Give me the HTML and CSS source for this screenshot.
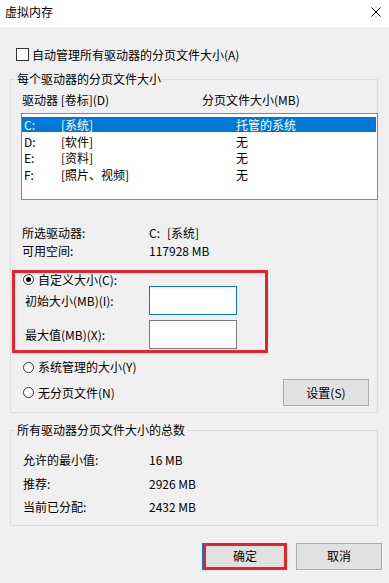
FILE: index.html
```html
<!DOCTYPE html>
<html lang="zh-CN">
<head>
    <meta charset="UTF-8">
    <meta name="viewport" content="width=device-width, initial-scale=1.0">
    <title>虚拟内存</title>
    <link rel="stylesheet" href="styles.css">
</head>
<body>
    <div class="titlebar">
        <span class="title">虚拟内存</span>
        <svg class="close" width="10" height="10" viewBox="0 0 10 10">
            <path d="M0.5 0.5 L9.5 9.5 M9.5 0.5 L0.5 9.5" stroke="#000" stroke-width="1" fill="none"/>
        </svg>
    </div>

    <div class="check-row">
        <span class="checkbox"></span>
        <span>自动管理所有驱动器的分页文件大小(A)</span>
    </div>

    <fieldset class="group group-drives">
        <legend>每个驱动器的分页文件大小</legend>
        <div class="list-head">
            <span class="head-drive">驱动器 [卷标](D)</span>
            <span>分页文件大小(MB)</span>
        </div>
        <div class="listbox">
            <div class="list-row selected"><span class="c1">C:</span><span class="c2">[系统]</span><span>托管的系统</span></div>
            <div class="list-row"><span class="c1">D:</span><span class="c2">[软件]</span><span>无</span></div>
            <div class="list-row"><span class="c1">E:</span><span class="c2">[资料]</span><span>无</span></div>
            <div class="list-row"><span class="c1">F:</span><span class="c2">[照片、视频]</span><span>无</span></div>
        </div>

        <div class="info">
            <div class="info-row"><span class="info-label">所选驱动器:</span><span>C:</span><span class="vol">[系统]</span></div>
            <div class="info-row"><span class="info-label">可用空间:</span><span>117928 MB</span></div>
        </div>

        <div class="highlight-box">
            <div class="radio-row"><span class="radio checked"></span>自定义大小(C):</div>
            <div class="field-row"><span class="field-label">初始大小(MB)(I):</span><span class="textbox focused"></span></div>
            <div class="field-row"><span class="field-label">最大值(MB)(X):</span><span class="textbox"></span></div>
        </div>

        <div class="radio-row standalone"><span class="radio"></span>系统管理的大小(Y)</div>
        <div class="radio-row with-button">
            <span class="radio"></span>无分页文件(N)
            <button class="btn btn-set">设置(S)</button>
        </div>
    </fieldset>

    <fieldset class="group group-total">
        <legend>所有驱动器分页文件大小的总数</legend>
        <div class="totals">
            <div class="total-row"><span class="total-label">允许的最小值:</span><span>16 MB</span></div>
            <div class="total-row"><span class="total-label">推荐:</span><span>2926 MB</span></div>
            <div class="total-row"><span class="total-label">当前已分配:</span><span>2432 MB</span></div>
        </div>
    </fieldset>

    <div class="buttons">
        <button class="btn btn-ok">确定</button>
        <button class="btn">取消</button>
    </div>
</body>
</html>
```

FILE: styles.css
```css
body {
    margin: 0;
    width: 389px;
    height: 583px;
    overflow: hidden;
    background: #f0f0f0;
    color: #000;
    font-family: "Noto Sans CJK SC", "Noto Sans", sans-serif;
    font-size: 12px;
    line-height: 14px;
}

.titlebar {
    height: 27px;
    box-sizing: border-box;
    background: #fff;
    display: flex;
    align-items: center;
    justify-content: space-between;
    padding: 0 8px 3px 5px;
}

.check-row {
    display: flex;
    align-items: center;
    gap: 3px;
    height: 13px;
    margin: 21px 0 0 16px;
}
.checkbox {
    width: 13px;
    height: 13px;
    box-sizing: border-box;
    border: 1px solid #333;
    background: #fff;
}

.group {
    margin: 0 11px 0 10px;
    padding: 0;
    border: 1px solid #dcdcdc;
    min-width: 0;
}
.group legend {
    margin-left: 4px;
    padding: 0 2px;
    line-height: 14px;
}
.group-drives {
    margin-top: 11px;
    padding-bottom: 6px;
}
.group-total {
    margin-top: 10px;
    padding-bottom: 6.5px;
}

/* 列表 */
.list-head {
    display: flex;
    height: 14px;
    margin-top: 7px;
    padding-left: 11px;
}
.head-drive {
    width: 180px;
}
.listbox {
    height: 87px;
    box-sizing: border-box;
    margin: 6px -1px 0 10px;
    padding: 3px 1px 0 0;
    border: 1px solid #828790;
    background: #fff;
}
.list-row {
    display: flex;
    height: 15px;
    line-height: 15px;
    margin-bottom: 1.67px;
    padding-left: 2px;
}
.list-row.selected {
    background: #0078d7;
    color: #fff;
}
.c1 { width: 37px; }
.c2 { width: 175px; }

.info {
    display: flex;
    flex-direction: column;
    gap: 4px;
    margin-top: 26px;
    padding-left: 11px;
}
.info-row {
    display: flex;
    height: 14px;
}
.info-label { width: 127px; }
.vol { margin-left: 7px; }

/* 红框 */
.highlight-box {
    width: 256px;
    box-sizing: border-box;
    margin: 12px 0 0 1px;
    padding: 0 0 1px;
    border: 3px solid #e8212e;
}
.radio-row {
    display: flex;
    align-items: center;
    height: 13px;
    padding-left: 8px;
}
.radio {
    width: 11px;
    height: 11px;
    box-sizing: border-box;
    border: 1px solid #333;
    border-radius: 50%;
    background: #fff;
    margin-right: 4px;
    display: flex;
    align-items: center;
    justify-content: center;
}
.radio.checked::after {
    content: "";
    width: 5px;
    height: 5px;
    border-radius: 50%;
    background: #000;
}
.field-row {
    display: flex;
    align-items: center;
    height: 29px;
    padding-left: 10px;
}
.field-row + .field-row { margin-top: 5px; }
.field-label { width: 124px; }
.textbox {
    width: 88px;
    height: 29px;
    box-sizing: border-box;
    border: 1px solid #7a7a7a;
    background: #fff;
}
.textbox.focused { border-color: #0078d7; }

.radio-row.standalone {
    height: 14px;
    margin-top: 7px;
    padding-left: 12px;
}
.radio-row.with-button {
    height: 27px;
    margin-top: 5px;
    padding: 0 8px 0 12px;
}

.btn {
    width: 86px;
    height: 27px;
    padding: 0;
    font: inherit;
    color: #000;
    background: #e1e1e1;
    border: 1px solid #adadad;
}
.btn-set { margin-left: auto; }

.totals {
    margin-top: 11px;
    padding-left: 12px;
}
.total-row {
    display: flex;
    height: 23.5px;
    line-height: 23.5px;
}
.total-label { width: 126px; }

.buttons {
    display: flex;
    justify-content: flex-end;
    gap: 9px;
    margin-top: 16.5px;
    padding-right: 7px;
}
.btn-ok {
    width: 84px;
    border: 3px solid #e8212e;
    box-shadow: -1px 0 0 #0078d7;
}
```
